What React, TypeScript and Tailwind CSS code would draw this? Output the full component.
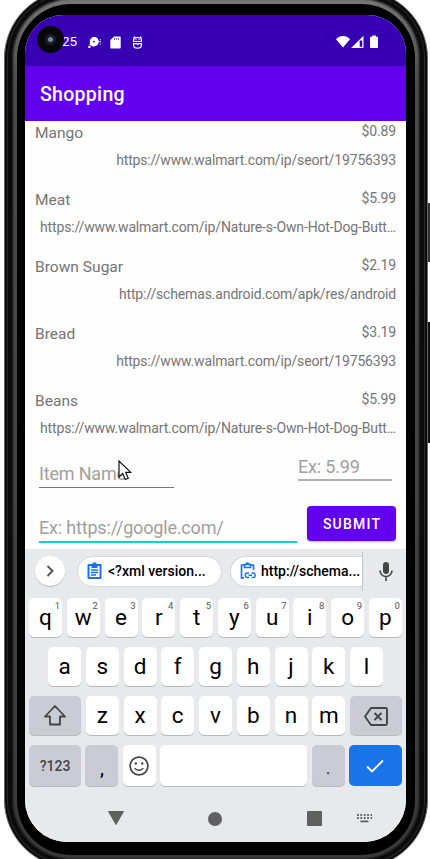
import React from "react";

type Item = { name: string; price: string; url: string };

const items: Item[] = [
  { name: "Mango", price: "$0.89", url: "https://www.walmart.com/ip/seort/19756393" },
  { name: "Meat", price: "$5.99", url: "https://www.walmart.com/ip/Nature-s-Own-Hot-Dog-Butt…" },
  { name: "Brown Sugar", price: "$2.19", url: "http://schemas.android.com/apk/res/android" },
  { name: "Bread", price: "$3.19", url: "https://www.walmart.com/ip/seort/19756393" },
  { name: "Beans", price: "$5.99", url: "https://www.walmart.com/ip/Nature-s-Own-Hot-Dog-Butt…" },
];

const keyBase =
  "relative flex h-[39px] items-center justify-center rounded-[5px] shadow-[0_1px_0_#b9babd]";

function Key({ label, hint }: { label: string; hint?: string }) {
  return (
    <div className={`${keyBase} w-[33px] shrink-0 bg-white text-[22.5px] leading-none text-black`}>
      <span className="-mt-[1px]">{label}</span>
      {hint && (
        <span className="absolute top-[3px] right-[2px] text-[9.5px] leading-none text-[#555]">{hint}</span>
      )}
    </div>
  );
}

function StatusBar() {
  return (
    <div className="relative flex h-[51px] shrink-0 items-center bg-[#3700b3] text-white">
      <div className="absolute top-[11px] left-[12px] h-[27px] w-[27px] rounded-full bg-[#08080a]">
        <div className="absolute top-[8px] left-[8px] h-[11px] w-[11px] rounded-full bg-[#1b1d24]" />
        <div className="absolute top-[11px] left-[11px] h-[5px] w-[5px] rounded-full bg-[#7289a5]" />
      </div>
      <span className="ml-[37px] mt-[3px] text-[13.5px] leading-none">25</span>
      <svg className="mt-[3px] ml-[11px]" width="14" height="13" viewBox="0 0 14 13" fill="white">
        <path fillRule="evenodd" d="M6 .7a4.900 4.900 0 1 1-1.800 9.500L3 9.500 1.200 8.200 2.200 7.500A4.900 4.900 0 0 1 6 .7ZM6 4.800a.9.900 0 1 0 0 1.800.9.900 0 0 0 0-1.800Z" />
        <path d="M.3 9.800h2.200v2.200H.3zM11.800 3.300h1v1h-1zM11.300 5.300h1.700v1h-1.700zM11.800 7.500h1v1h-1z" />
      </svg>
      <svg className="mt-[3px] ml-[8px]" width="11" height="13" viewBox="0 0 11 13" fill="white">
        <path fillRule="evenodd" d="M4 .5h6a.7.7 0 0 1 .7.7v10.600a.7.7 0 0 1-.7.7H1a.7.7 0 0 1-.7-.7V4.200ZM4 2.300v1.500h.8V2.300ZM6 2.300v1.500h.8V2.300ZM8 2.300v1.500h.8V2.300Z" />
      </svg>
      <svg className="mt-[3px] ml-[11px]" width="11" height="13" viewBox="0 0 11 13" fill="none" stroke="white" strokeWidth="1.200">
        <path d="M1.600 5.500V4q0-2.400 2.500-2.400h2.800q2.500 0 2.500 2.400v1.500ZM3.500 3.700h1M6.500 3.700h1M1.600 .5l1.200 1.300M9.400 .5 8.200 1.800M1 7.700h3.700l1 .8 1-.8H10M1.600 7.700v1.500q0 2.900 3.900 2.900t3.900-2.900V7.700" />
      </svg>
      <svg className="mt-[3px] ml-[193px]" width="44" height="14" viewBox="0 0 44 14" fill="white">
        <path d="M0 4.200C4-.2 10-.2 14 4.200L7 12.600Z" />
        <path fillRule="evenodd" d="M15 13 27.500.7V13ZM23.700 5.500v6.300h2.500V5.500Z" />
        <path d="M36.200.5h3.600v1.200h1.400q.8 0 .8.800v9.700q0 .8-.8.800h-6.400q-.8 0-.8-.8V2.500q0-.8.800-.8h1.400Z" />
      </svg>
    </div>
  );
}

function ItemRow({ item }: { item: Item }) {
  return (
    <div className="flex h-[67px] shrink-0 flex-col px-[10px] text-[#757575]">
      <div className="flex h-[22px] items-start justify-between">
        <span className="text-[15.500px] leading-[23px] tracking-[0.030px]">{item.name}</span>
        <span className="text-[14px] leading-[19px] tracking-[-0.150px]">{item.price}</span>
      </div>
      <span className="mt-[6px] self-end text-[14px] leading-[21px] tracking-[-0.150px] whitespace-nowrap">{item.url}</span>
    </div>
  );
}

function EntryForm() {
  return (
    <div className="-mt-[8px] flex shrink-0 flex-col pl-[14px] text-[#a0a0a0]">
      <div className="flex items-start justify-between pr-[14px]">
        <div className="relative mt-[7px] h-[32px] w-[135px] border-b border-[#757575] text-[18px] leading-[36px] tracking-[-0.180px]">
          Item Name
          <svg className="absolute top-[4px] left-[79px]" width="15" height="21" viewBox="0 0 15 21">
            <path d="M1 1v16l3.700-3.500L7.300 19.500l3-1.300-2.600-5.800h5Z" fill="white" stroke="#111" strokeWidth="1.200" />
          </svg>
        </div>
        <div className="h-[32px] w-[94px] border-b-2 border-[#b0b0b0] text-[18px] leading-[36px] tracking-[-0.180px]">Ex: 5.99</div>
      </div>
      <div className="mt-[18px] flex items-start justify-between pr-[10px]">
        <div className="mt-[4px] h-[33px] w-[258px] border-b-2 border-[#03dac5] text-[18px] leading-[36px] tracking-[-0.180px]">Ex: https://google.com/</div>
        <div className="flex h-[35px] w-[89px] items-center justify-center rounded-[4px] bg-[#6200ee] pt-[1px] pl-[1px] text-[14px] font-medium tracking-[1.200px] text-white shadow-[0_1px_2px_#0004]">
          SUBMIT
        </div>
      </div>
    </div>
  );
}

function Suggestions() {
  return (
    <div className="flex h-[44px] items-center pl-[10px] text-black">
      <div className="flex h-[30px] w-[30px] items-center justify-center rounded-full bg-white shadow-[0_1px_1px_#0003]">
        <svg width="8" height="12" viewBox="0 0 8 12" fill="none" stroke="#555" strokeWidth="2"><path d="m1.500 1 5 5-5 5" /></svg>
      </div>
      <div className="ml-[12px] flex h-[31px] w-[145px] items-center rounded-full border border-[#d5d6d9] bg-white pt-[1px] pl-[9px] text-[14px] font-medium">
        <svg className="-mt-[1px] mr-[6px]" width="15" height="18" viewBox="0 0 15 18">
          <path fillRule="evenodd" fill="#1a73e8" d="M1.500 2h3.700a2.400 2.400 0 0 1 4.600 0h3.700q1 0 1 1v13q0 1-1 1h-12q-1 0-1-1V3q0-1 1-1ZM2.500 4v11h10V4h-2v2h-6V4Z" />
          <path d="M4 8h7M4 10.500h7M4 13h5" stroke="#1a73e8" strokeWidth="1.400" />
        </svg>
        &lt;?xml version...
      </div>
      <div className="ml-[8px] flex h-[39px] w-[133px] items-center border-r border-[#c5c6ca]">
        <div className="flex h-[31px] w-[132px] items-center rounded-l-full border border-r-0 border-[#d5d6d9] bg-white pt-[1px] pl-[9px] text-[14px] font-medium whitespace-nowrap">
          <svg className="-mt-[1px] mr-[5px] shrink-0" width="16" height="18" viewBox="0 0 16 18" fill="none" stroke="#1a73e8" strokeWidth="1.700">
            <path d="M4 15.800H1.500V3H4M11 3h2.500v5M4.500 2.500h6v3h-6ZM6 2.500a1.500 1.500 0 0 1 3 0" />
            <path d="M9 15.500H7.500a2.200 2.200 0 0 1 0-4.500H9M11.500 11H13a2.200 2.200 0 0 1 0 4.500h-1.500M8.500 13.250H12" strokeWidth="1.400" />
          </svg>
          http://schema...
        </div>
      </div>
      <svg className="ml-[16px]" width="14" height="19" viewBox="0 0 14 19">
        <rect x="4" y="0" width="6" height="12" rx="3" fill="#444" />
        <path d="M1 8.500a6 6 0 0 0 12 0M7 14.500V19" fill="none" stroke="#444" strokeWidth="1.600" />
      </svg>
    </div>
  );
}

function Keyboard() {
  return (
    <div className="flex flex-1 flex-col bg-[#e8e9ed]">
      <Suggestions />
      <div className="mt-[5px] flex justify-between px-[4px]">
        {"qwertyuiop".split("").map((k, i) => (
          <Key key={k} label={k} hint={String((i + 1) % 10)} />
        ))}
      </div>
      <div className="mt-[10px] flex justify-between px-[23px]">
        {"asdfghjkl".split("").map((k) => (
          <Key key={k} label={k} />
        ))}
      </div>
      <div className="mt-[10px] flex justify-between px-[4px]">
        <div className={`${keyBase} w-[52px] bg-[#c9ccd4]`}>
          <svg width="22" height="21" viewBox="0 0 22 21" fill="none" stroke="#444" strokeWidth="1.800" strokeLinejoin="round">
            <path d="M11 1 1 11.500h5v8h10v-8h5Z" />
          </svg>
        </div>
        {"zxcvbnm".split("").map((k) => (
          <Key key={k} label={k} />
        ))}
        <div className={`${keyBase} w-[52px] bg-[#c9ccd4]`}>
          <svg className="mt-[1px]" width="24" height="19" viewBox="0 0 24 19" fill="none" stroke="#444" strokeWidth="1.900" strokeLinejoin="round">
            <path d="M7 1h14.500q1.500 0 1.500 1.500v14q0 1.500-1.500 1.500H7L1 9.500ZM10.500 6l7 7M17.500 6l-7 7" />
          </svg>
        </div>
      </div>
      <div className="mt-[10px] flex justify-between px-[4px]">
        <div className="flex h-[41px] w-[52px] items-center justify-center rounded-[5px] bg-[#c9ccd4] pt-[1px] text-[14px] font-medium text-[#444] shadow-[0_1px_0_#b9babd]">?123</div>
        <div className="flex h-[41px] w-[33px] justify-center rounded-[5px] bg-[#c9ccd4] text-[20px] leading-[46px] text-black shadow-[0_1px_0_#b9babd]">,</div>
        <div className="flex h-[41px] w-[33px] items-center justify-center rounded-[5px] bg-white shadow-[0_1px_0_#b9babd]">
          <svg width="20" height="20" viewBox="0 0 20 20" fill="none" stroke="#444" strokeWidth="1.700">
            <circle cx="10" cy="10" r="8.900" />
            <path d="M5.700 12a4.700 3.600 0 0 0 8.600 0" strokeWidth="1.500" />
            <circle cx="6.800" cy="7.500" r="1.200" fill="#444" stroke="none" />
            <circle cx="13.200" cy="7.500" r="1.200" fill="#444" stroke="none" />
          </svg>
        </div>
        <div className="h-[41px] w-[147px] rounded-[5px] bg-white shadow-[0_1px_0_#b9babd]" />
        <div className="flex h-[41px] w-[33px] justify-center rounded-[5px] bg-[#c9ccd4] text-[16px] leading-[48px] text-black shadow-[0_1px_0_#b9babd]">.</div>
        <div className="flex h-[41px] w-[53px] items-center justify-center rounded-[5px] bg-[#1a73e8]">
          <svg width="18" height="14" viewBox="0 0 18 14" fill="none" stroke="white" strokeWidth="1.900"><path d="m1 7.500 5 5L17 1.500" /></svg>
        </div>
      </div>
      <div className="mt-[24px] flex items-center pl-[83px]">
        <svg width="16" height="14" viewBox="0 0 16 14" fill="#606060"><path d="M.5.500h15L8 13.500Z" stroke="#606060" strokeLinejoin="round" /></svg>
        <div className="mt-[1px] ml-[84px] h-[14px] w-[14px] rounded-full bg-[#606060]" />
        <div className="mt-[1px] ml-[85px] h-[15px] w-[15px] rounded-[1px] bg-[#606060]" />
        <svg className="mt-[1px] ml-[35px]" width="15" height="9" viewBox="0 0 15 9" fill="#606060">
          {[0, 3.400, 6.800, 10.200, 13.600].map((x) => (
            <React.Fragment key={x}>
              <rect x={x} y="0" width="1.700" height="2" />
              <rect x={x} y="3" width="1.700" height="2" />
            </React.Fragment>
          ))}
          <rect x="3.400" y="6.500" width="8" height="1.800" />
        </svg>
      </div>
    </div>
  );
}

export default function App() {
  return (
    <div className="relative h-[859px] w-[430px] overflow-hidden bg-white font-['Roboto',sans-serif]">
      <div className="absolute top-[203px] left-[427px] h-[59px] w-[3px] bg-[#333]" />
      <div className="absolute top-[322px] left-[427px] h-[121px] w-[3px] bg-[#111]" />
      <div className="relative -mt-[10px] ml-[4px] h-[878px] w-[424px] rounded-[68px] border border-[#666] bg-[#0b0b0b] p-[7px] shadow-[inset_0_0_0_2px_#0b0b0b,inset_0_0_0_3px_#2a2a2a]">
        <div className="h-full w-full rounded-[60px] bg-linear-to-b from-[#777] via-[#4c4c4c] via-10% to-[#3a3a3a] p-[5px] pt-[6px] shadow-[inset_0_0_2px_1px_#111]">
          <div className="h-full w-full rounded-[54px] bg-black px-[8px] pt-[11px] pb-[12px]">
            <div className="flex h-[827px] w-[381px] flex-col overflow-hidden rounded-t-[38px] rounded-b-[42px] bg-white">
              <StatusBar />
              <div className="flex h-[55px] shrink-0 items-center bg-[#6200ee] pt-[2px] pl-[15px] text-[19.500px] font-medium tracking-[0.300px] text-white">Shopping</div>
              <div className="flex h-[428px] shrink-0 flex-col overflow-hidden bg-[#fefefe] pt-[1px]">
                {items.map((item) => (
                  <ItemRow key={item.name} item={item} />
                ))}
                <EntryForm />
              </div>
              <Keyboard />
            </div>
          </div>
        </div>
      </div>
    </div>
  );
}
